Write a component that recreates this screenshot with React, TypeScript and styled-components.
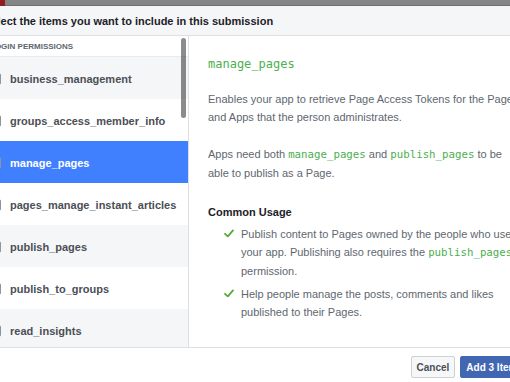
import styled, { createGlobalStyle } from 'styled-components';

const permissions = [
  'business_management',
  'groups_access_member_info',
  'manage_pages',
  'pages_manage_instant_articles',
  'publish_pages',
  'publish_to_groups',
  'read_insights',
];

const GlobalStyle = createGlobalStyle`
  html, body {
    margin: 0;
    padding: 0;
    background: #ffffff;
    overflow: hidden;
    font-family: "Liberation Sans", Arial, Helvetica, sans-serif;
  }
`;

const Check = () => (
  <svg width="10" height="9" viewBox="0 0 10 9">
    <polyline points="1,4.8 3.8,7.4 9,1.4" fill="none" stroke="#5aa83a" strokeWidth="1.8" strokeLinecap="round" strokeLinejoin="round" />
  </svg>
);

export default function App() {
  const selected = 'manage_pages';
  return (
    <>
      <GlobalStyle />
      <Backdrop>
        <RedMark />
      </Backdrop>
      <Dialog>
        <Header>Select the items you want to include in this submission</Header>
        <Body>
          <Sidebar>
            <SectionLabel>Login Permissions</SectionLabel>
            {permissions.map((p, i) => (
              <Row key={p} $odd={i % 2 === 0} $selected={p === selected}>
                <Box />
                <span>{p}</span>
              </Row>
            ))}
            <Scrollbar />
          </Sidebar>
          <Detail>
            <Title>manage_pages</Title>
            <Para>Enables your app to retrieve Page Access Tokens for the Pages and Apps that the person administrates.</Para>
            <Para>
              Apps need both <Code>manage_pages</Code> and <Code>publish_pages</Code> to be able to publish as a Page.
            </Para>
            <Subhead>Common Usage</Subhead>
            <List>
              <Item>
                <Check />
                <span>
                  Publish content to Pages owned by the people who use your app. Publishing also requires the <Code>publish_pages</Code> permission.
                </span>
              </Item>
              <Item>
                <Check />
                <span>Help people manage the posts, comments and likes published to their Pages.</span>
              </Item>
            </List>
          </Detail>
        </Body>
        <Footer>
          <Button>Cancel</Button>
          <Button $primary>Add 3 Items</Button>
        </Footer>
      </Dialog>
    </>
  );
}

const Backdrop = styled.div`
  height: 6px;
  background: #858585;
  border-bottom: 1px solid #6f6f6f;
  box-sizing: border-box;
`;

const RedMark = styled.div`
  width: 5px;
  height: 6px;
  background: #8e1f1c;
`;

const Dialog = styled.div`
  margin-left: -28px;
  width: 569px;
  background: #ffffff;
`;

const Header = styled.div`
  height: 30px;
  box-sizing: border-box;
  padding: 0 12px;
  display: flex;
  align-items: center;
  background: #f5f6f7;
  border-bottom: 1px solid #dddfe2;
  color: #1d2129;
  font-size: 11px;
  font-weight: bold;
  white-space: nowrap;
`;

const Body = styled.div`
  display: flex;
  height: 311px;
  box-sizing: border-box;
`;

const Sidebar = styled.div`
  position: relative;
  width: 216px;
  flex: 0 0 216px;
  border-right: 1px solid #dddfe2;
  overflow: hidden;
`;

const SectionLabel = styled.div`
  height: 21px;
  box-sizing: border-box;
  padding: 1px 0 0 18px;
  display: flex;
  align-items: center;
  color: #606770;
  font-size: 8px;
  font-weight: bold;
  text-transform: uppercase;
  border-bottom: 1px solid #e9ebee;
`;

const Row = styled.div<{ $odd: boolean; $selected: boolean }>`
  height: 42px;
  box-sizing: border-box;
  padding: 2px 0 0 17px;
  display: flex;
  align-items: center;
  gap: 9px;
  background: ${p => (p.$selected ? '#4080ff' : p.$odd ? '#f5f6f7' : '#ffffff')};
  color: ${p => (p.$selected ? '#ffffff' : '#4b4f56')};
  font-size: 11px;
  font-weight: bold;
`;

const Box = styled.span`
  width: 12px;
  height: 12px;
  box-sizing: border-box;
  border: 1px solid #8d949e;
  border-radius: 2px;
  background: #ffffff;
`;

const Scrollbar = styled.div`
  position: absolute;
  top: 2px;
  right: 2px;
  width: 5px;
  height: 80px;
  border-radius: 3px;
  background: rgba(0, 0, 0, 0.45);
`;

const Detail = styled.div`
  flex: 1;
  padding: 19px 19px 0 19px;
  color: #606770;
  font-size: 11px;
  line-height: 18px;
`;

const Title = styled.div`
  font-family: "DejaVu Sans Mono", "Liberation Mono", monospace;
  font-size: 12px;
  color: #4caf50;
  margin-bottom: 17px;
`;

const Para = styled.p`
  margin: 0 0 19px;
`;

const Code = styled.code`
  font-family: "DejaVu Sans Mono", "Liberation Mono", monospace;
  font-size: 10.75px;
  color: #4caf50;
`;

const Subhead = styled.div`
  margin-top: 21px;
  color: #1d2129;
  font-weight: bold;
`;

const List = styled.div`
  margin-top: 4px;
  display: flex;
  flex-direction: column;
  gap: 5px;
`;

const Item = styled.div`
  display: flex;
  align-items: flex-start;
  gap: 7px;
  padding-left: 16px;

  svg {
    flex: 0 0 10px;
    margin-top: 4px;
  }
`;

const Footer = styled.div`
  display: flex;
  justify-content: flex-end;
  gap: 5px;
  padding: 8px 12px;
  border-top: 1px solid #dddfe2;
`;

const Button = styled.button<{ $primary?: boolean }>`
  height: 22px;
  padding: 0 5px;
  border-radius: 2px;
  border: 1px solid ${p => (p.$primary ? '#4267b2' : '#ced0d4')};
  background: ${p => (p.$primary ? '#4267b2' : '#f6f7f9')};
  color: ${p => (p.$primary ? '#ffffff' : '#4b4f56')};
  font-family: "Liberation Sans", Arial, sans-serif;
  font-size: 10px;
  font-weight: bold;
`;
